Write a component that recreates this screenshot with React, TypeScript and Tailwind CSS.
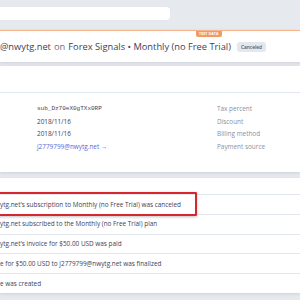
import { ReactElement } from 'react'

const details = [
  { value: 'sub_Dz70eX0gTXx0RP', mono: true, label: 'Tax percent' },
  { value: '2018/11/16', label: 'Discount' },
  { value: '2018/11/16', label: 'Billing method' },
  { value: 'j2779799@nwytg.net →', link: true, label: 'Payment source' },
]

const events = [
  "ytg.net's subscription to Monthly (no Free Trial) was canceled",
  'ytg.net subscribed to the Monthly (no Free Trial) plan',
  "ytg.net's invoice for $50.00 USD was paid",
  'e for $50.00 USD to j2779799@nwytg.net was finalized',
  'e was created',
]

const Header = (): ReactElement => (
  <header className="relative h-[32px] bg-white border-t border-[#f6b48c] shadow-[0_1px_3px_rgba(60,66,87,0.15)] flex items-center">
    <span className="absolute left-[196px] top-0 h-[6px] px-[3px] rounded-b-[2px] bg-[#f19a63] text-white text-[3.6px] font-bold leading-[6px] tracking-wide">
      TEST DATA
    </span>
    <h1 className="flex items-center text-[9.3px] text-[#3c4257] whitespace-nowrap">
      <span>@nwytg.net</span>
      <span className="ml-[3px] text-[#697386]">on</span>
      <span className="ml-[3px]">Forex Signals • Monthly (no Free Trial)</span>
      <span className="ml-[6px] h-[10px] px-[4px] rounded-[3px] bg-[#e3e8ee] text-[#4f566b] text-[4.8px] font-semibold leading-[10px]">
        Canceled
      </span>
    </h1>
  </header>
)

const Details = (): ReactElement => (
  <section className="h-[106px] bg-white shadow-[0_1px_3px_rgba(60,66,87,0.15)]">
    <div className="h-[27px] border-b border-[#e3e8ee]" />
    <div className="grid grid-cols-[180px_1fr] pt-[11px] pl-[37px] gap-y-[2.7px] text-[6.4px] leading-[10px]">
      {details.map((row) => (
        <div key={row.label} className="contents">
          <span
            className={
              row.mono
                ? "font-['Liberation_Mono',monospace] text-[6px] text-[#3c4257]"
                : row.link
                  ? 'text-[#556cd6]'
                  : 'text-[#3c4257]'
            }
          >
            {row.value}
          </span>
          <span className="text-[#8792a2]">{row.label}</span>
        </div>
      ))}
    </div>
  </section>
)

const Events = (): ReactElement => (
  <section className="h-[115px] bg-white shadow-[0_1px_3px_rgba(60,66,87,0.15)]">
    <div className="h-[17px] border-b border-[#e3e8ee]" />
    <ul className="text-[6.4px] text-[#3c4257] whitespace-nowrap">
      {events.map((text, i) => (
        <li
          key={i}
          className={`relative h-[19.8px] flex items-center ${i < events.length - 1 ? 'border-b border-[#e3e8ee]' : ''}`}
        >
          <span>{text}</span>
          {i === 0 && (
            <span className="absolute -left-[4px] top-[-3px] w-[201px] h-[24px] border-2 border-[#d8262e] rounded-[1px] shadow-[0_1px_3px_rgba(0,0,0,0.25)]" />
          )}
        </li>
      ))}
    </ul>
  </section>
)

export default function App() {
  return (
    <div className="w-[300px] h-[300px] overflow-hidden bg-[#e6e9ee] font-['Open_Sans',sans-serif]">
      <div className="h-[30px] pt-[7px]">
        <div className="w-[170px] h-[13px] bg-white rounded-r-[3px] shadow-[0_0_1px_rgba(0,0,0,0.1)]" />
      </div>
      <Header />
      <div className="h-[4px]" />
      <Details />
      <div className="h-[6px]" />
      <Events />
    </div>
  )
}
